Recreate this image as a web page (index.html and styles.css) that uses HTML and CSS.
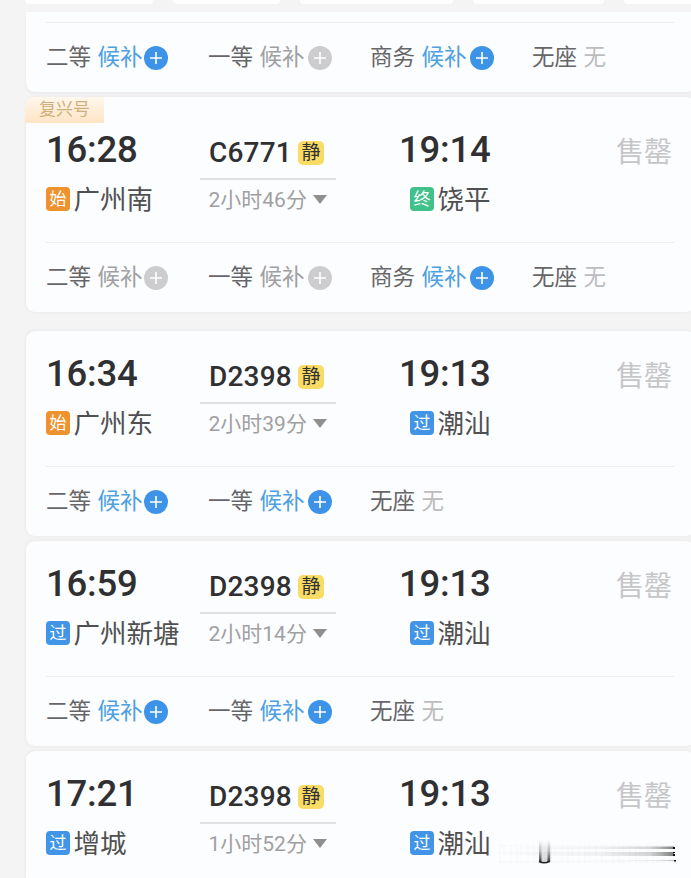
FILE: index.html
```
<!DOCTYPE html>
<html lang="zh-CN">
<head>
<meta charset="utf-8">
<title>车次列表</title>
<link rel="stylesheet" href="styles.css">
</head>
<body>
<div class="filters"><i class="f1"></i><i class="f2"></i><i class="f3"></i><i class="f4"></i><i class="f5"></i></div>
<main class="list" id="list"></main>
<svg class="smudge" width="182" height="28" viewBox="0 0 182 28">
  <defs>
    <linearGradient id="h"><stop offset="0" stop-color="#777" stop-opacity="0"/><stop offset=".55" stop-color="#777" stop-opacity=".08"/><stop offset=".85" stop-color="#777" stop-opacity=".3"/><stop offset="1" stop-color="#444" stop-opacity=".7"/></linearGradient>
    <linearGradient id="v" x2="0" y2="1"><stop offset="0" stop-color="#777" stop-opacity="0"/><stop offset=".5" stop-color="#777" stop-opacity=".4"/><stop offset="1" stop-color="#333"/></linearGradient>
    <linearGradient id="m" x2="0" y2="1"><stop offset="0" stop-color="#aaa" stop-opacity="0"/><stop offset="1" stop-color="#999" stop-opacity=".4"/></linearGradient>
    <pattern id="p" width="17" height="17" patternUnits="userSpaceOnUse"><path d="M2 0v17M6 3v12M13 1v15M0 5h17M0 13h17" stroke="#999" stroke-opacity=".07"/></pattern>
  </defs>
  <rect x="0" y="5" width="178" height="18" fill="url(#p)"/>
  <rect x="12" y="6.500" width="164" height="2.500" fill="url(#h)"/>
  <rect x="12" y="12" width="164" height="4" fill="url(#h)"/>
  <rect x="50" y="20" width="126" height="1" fill="url(#h)" opacity=".5"/>
  <rect x="41" y="0" width="12" height="22" fill="url(#m)"/>
  <rect x="41" y="0" width="2.500" height="22" fill="url(#v)"/>
  <rect x="49.500" y="0" width="2.500" height="22" fill="url(#v)"/>
  <path d="M41 21.500q5 2.500 10.500 0" fill="none" stroke="#222" stroke-width="1.500"/>
  <path d="M175 7h2v2h-2zM175 12h2v1h-2zM175 14h2v2h-2zM176 20h2v1.500h-2z" fill="#111"/>
</svg>
<script src="app.js"></script>
</body>
</html>
```
FILE: styles.css
```
* { box-sizing: border-box; }
body {
  margin: 0;
  height: 878px;
  overflow: hidden;
  position: relative;
  background: #f4f4f4;
  font-family: Roboto, "Noto Sans CJK SC", sans-serif;
  font-weight: 400;
  color: #505052;
}
.filters { display: flex; gap: 20px; height: 12px; padding-left: 25px; }
.filters i { height: 4px; flex: none; background: #fefefe; border-radius: 0 0 8px 8px; }
.f1 { width: 128px; }
.f2 { width: 107px; }
.f3 { width: 153px; }
.f4 { width: 131px; }
.f5 { width: 100px; }
.list { margin-left: 26px; display: flex; flex-direction: column; gap: 5px; }
.card {
  flex: none;
  width: 669px;
  background: #fcfdfe;
  border-radius: 9px;
  box-shadow: 0 0 3px 1px #ebebed;
  padding-left: 20px;
}
.card.cut { border-radius: 0 0 9px 9px; box-shadow: 0 2px 3px #ebebed; padding-top: 10px; }
.card.gap { margin-bottom: 14px; }
.card.last { height: 127px; border-radius: 9px 9px 0 0; }
.card.last .trip { height: 127px; }
.tag {
  display: block;
  width: 79px;
  height: 26px;
  margin: 0 0 -16px -21px;
  padding-left: 14px;
  font-size: 17px;
  line-height: 25px;
  color: #cfae7a;
  background: linear-gradient(#fff7ec, #fee4c5);
  border-radius: 8px 0 0 0;
}
.trip { display: grid; grid-template-columns: 154px 199px 217px 58px; height: 135px; }
.time { height: 49px; margin-top: 18px; font-size: 36.5px; line-height: 49px; font-weight: 500; letter-spacing: -.2px; color: #303033; white-space: nowrap; }
.station { display: flex; align-items: center; gap: 3.500px; height: 49px; padding-top: 1px; font-size: 26.5px; line-height: 49px; white-space: nowrap; }
.arrive .station { padding-left: 11px; }
.mark { width: 24px; height: 24px; margin-top: -1px; border-radius: 4px; font-size: 17px; line-height: 24px; text-align: center; color: #fff; flex: none; background: #4295e6; }
.mark.start { background: #ee922f; }
.mark.end { background: #40c18a; }
.train { width: 136px; padding-top: 25px; }
.no { display: flex; align-items: center; height: 48px; padding: 0 0 6px 9px; gap: 5px; border-bottom: 2px solid #e1e1e3; font-size: 28px; font-weight: 500; color: #303033; }
.no span { width: 84px; letter-spacing: .2px; }
.no b { width: 26px; height: 24px; margin-top: 2px; border-radius: 5px; background: #f9dc64; font-size: 19px; line-height: 23px; font-weight: 400; text-align: center; letter-spacing: 0; }
.dur { display: flex; align-items: center; gap: 6px; height: 36px; padding-left: 8.500px; font-size: 21px; color: #a0a0a2; white-space: nowrap; }
.dur i { margin-top: 2px; border: 7px solid transparent; border-top: 9px solid #8f8f91; border-bottom: 0; }
.sold { padding-top: 26px; font-size: 28px; line-height: 40px; color: #c6c6c8; }
.seats { display: grid; grid-template-columns: 162px 162px 162px 1fr; width: 628px; height: 70px; border-top: 1.500px solid #eeeef0; font-size: 22.5px; line-height: 68px; color: #666668; }
.seat { display: flex; align-items: flex-start; height: 68px; line-height: 68px; white-space: nowrap; }
.seat span { margin-left: 6.500px; color: #a0a0a2; }
.seat .none { color: #bcbcbe; }
.seat .on { color: #4da0e2; }
.seat svg { width: 24px; height: 24px; margin: 23px 0 0 3px; fill: #cdcdcf; }
.seat:first-child svg { margin-left: 1.500px; }
.seat .blue { fill: #3d93e8; }
.smudge { position: absolute; left: 498px; top: 840px; }
```
FILE: app.js
```
const trains = [
  { cut: true, seats: [['二等', 1], ['一等', 0], ['商务', 1], ['无座']] },
  { tag: '复兴号', gap: true, dep: '16:28', from: '广州南', fm: '始', no: 'C6771', dur: '2小时46分', arr: '19:14', to: '饶平', tm: '终',
    seats: [['二等', 0], ['一等', 0], ['商务', 1], ['无座']] },
  { dep: '16:34', from: '广州东', fm: '始', no: 'D2398', dur: '2小时39分', arr: '19:13', to: '潮汕', tm: '过', seats: [['二等', 1], ['一等', 1], ['无座']] },
  { dep: '16:59', from: '广州新塘', fm: '过', no: 'D2398', dur: '2小时14分', arr: '19:13', to: '潮汕', tm: '过', seats: [['二等', 1], ['一等', 1], ['无座']] },
  { last: true, dep: '17:21', from: '增城', fm: '过', no: 'D2398', dur: '1小时52分', arr: '19:13', to: '潮汕', tm: '过' }
];
const kinds = { '始': 'start', '终': 'end', '过': 'pass' };
const mark = m => `<span class="mark ${kinds[m]}">${m}</span>`;
const plus = on => `<svg class="${on ? 'blue' : ''}" viewBox="0 0 24 24"><circle cx="12" cy="12" r="12"/><path d="M12 6v12M6 12h12" stroke="#fff" stroke-width="1.600"/></svg>`;
const seat = ([name, on]) => `<div class="seat">${name}` + (on === undefined
  ? '<span class="none">无</span>'
  : `<span class="${on ? 'on' : ''}">候补</span>${plus(on)}`) + '</div>';
const trip = t => `<div class="trip">
  <div><div class="time">${t.dep}</div><div class="station">${mark(t.fm)}${t.from}</div></div>
  <div class="train"><div class="no"><span>${t.no}</span><b>静</b></div><div class="dur">${t.dur}<i></i></div></div>
  <div class="arrive"><div class="time">${t.arr}</div><div class="station">${mark(t.tm)}${t.to}</div></div>
  <div class="sold">售罄</div></div>`;
document.getElementById('list').innerHTML = trains.map(t =>
  `<section class="card ${t.cut ? 'cut' : ''} ${t.gap ? 'gap' : ''} ${t.last ? 'last' : ''}">${t.tag ? `<span class="tag">${t.tag}</span>` : ''}${t.cut ? '' : trip(t)}${t.seats ? `<div class="seats">${t.seats.map(seat).join('')}</div>` : ''}</section>`).join('');
```
